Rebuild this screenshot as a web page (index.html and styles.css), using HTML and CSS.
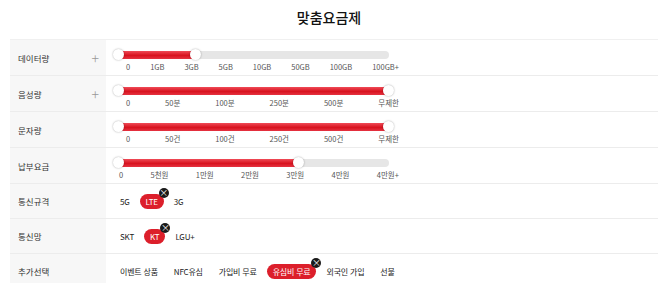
FILE: index.html
```html
<!DOCTYPE html>
<html lang="ko">
<head>
    <meta charset="UTF-8">
    <title>맞춤요금제</title>
    <link rel="stylesheet" href="styles.css">
</head>
<body>
    <h1 class="title">맞춤요금제</h1>
    <div class="filter">
        <div class="row">
            <div class="label">데이터량 <span class="plus">+</span></div>
            <div class="cell">
                <div class="slider">
                    <div class="track"><div class="fill" style="width: 28.7%"></div></div>
                    <span class="knob" style="left: 0%"></span>
                    <span class="knob" style="left: 28.7%"></span>
                </div>
                <div class="ticks">
                    <span>0</span><span>1GB</span><span>3GB</span><span>5GB</span><span>10GB</span><span>50GB</span><span>100GB</span><span>100GB+</span>
                </div>
            </div>
        </div>
        <div class="row">
            <div class="label">음성량 <span class="plus">+</span></div>
            <div class="cell">
                <div class="slider">
                    <div class="track"><div class="fill" style="width: 100%"></div></div>
                    <span class="knob" style="left: 0%"></span>
                    <span class="knob" style="left: 100%"></span>
                </div>
                <div class="ticks">
                    <span>0</span><span>50분</span><span>100분</span><span>250분</span><span>500분</span><span>무제한</span>
                </div>
            </div>
        </div>
        <div class="row">
            <div class="label">문자량</div>
            <div class="cell">
                <div class="slider">
                    <div class="track"><div class="fill" style="width: 100%"></div></div>
                    <span class="knob" style="left: 0%"></span>
                    <span class="knob" style="left: 100%"></span>
                </div>
                <div class="ticks">
                    <span>0</span><span>50건</span><span>100건</span><span>250건</span><span>500건</span><span>무제한</span>
                </div>
            </div>
        </div>
        <div class="row">
            <div class="label">납부요금</div>
            <div class="cell">
                <div class="slider">
                    <div class="track"><div class="fill" style="width: 66.5%"></div></div>
                    <span class="knob" style="left: 0%"></span>
                    <span class="knob" style="left: 66.5%"></span>
                </div>
                <div class="ticks ticks-wide">
                    <span>0</span><span>5천원</span><span>1만원</span><span>2만원</span><span>3만원</span><span>4만원</span><span>4만원+</span>
                </div>
            </div>
        </div>
        <div class="row row-short">
            <div class="label">통신규격</div>
            <div class="cell chips">
                <span class="chip">5G</span>
                <span class="chip active">LTE<i class="close">×</i></span>
                <span class="chip">3G</span>
            </div>
        </div>
        <div class="row row-short">
            <div class="label">통신망</div>
            <div class="cell chips">
                <span class="chip">SKT</span>
                <span class="chip active">KT<i class="close">×</i></span>
                <span class="chip">LGU+</span>
            </div>
        </div>
        <div class="row row-short">
            <div class="label">추가선택</div>
            <div class="cell chips">
                <span class="chip">이벤트 상품</span>
                <span class="chip">NFC유심</span>
                <span class="chip">가입비 무료</span>
                <span class="chip active">유심비 무료<i class="close">×</i></span>
                <span class="chip">외국인 가입</span>
                <span class="chip">선불</span>
            </div>
        </div>
    </div>
</body>
</html>
```

FILE: styles.css
```css
body {
    margin: 0;
    font-family: "Noto Sans CJK KR", "Noto Sans", sans-serif;
    background-color: #fff;
    color: #222;
    overflow: hidden;
}

.title {
    margin: 0;
    height: 39px;
    line-height: 34px;
    text-align: center;
    font-size: 14px;
    font-weight: 500;
    color: #111;
}

.filter {
    margin-left: 10px;
    border-top: 1px solid #f0f0f0;
}

.row {
    display: flex;
    height: 35px;
    border-bottom: 1px solid #ececec;
}

.row-short {
    height: 34px;
}

.label {
    display: flex;
    align-items: center;
    justify-content: space-between;
    width: 81px;
    padding: 0 7px 0 8px;
    background-color: #f7f7f7;
    font-size: 8.5px;
    color: #333;
}

.plus {
    font-size: 14px;
    font-weight: 300;
    color: #999;
}

.cell {
    flex: 1;
    padding-left: 13px;
}

.slider {
    position: relative;
    width: 270px;
    height: 8px;
    margin-top: 11px;
}

.track {
    height: 8px;
    border-radius: 4px;
    background-color: #e6e6e6;
    overflow: hidden;
}

.fill {
    height: 100%;
    border-radius: 4px;
    background: linear-gradient(to bottom, #f04b57 0%, #d8131f 55%, #e53341 100%);
}

.knob {
    position: absolute;
    top: -2px;
    width: 11px;
    height: 11px;
    margin-left: -6px;
    border-radius: 50%;
    background-color: #fff;
    box-shadow: 0 0 2px rgba(0, 0, 0, 0.35);
}

.ticks {
    display: flex;
    justify-content: space-between;
    width: 273px;
    margin-top: 2px;
    padding-left: 7px;
    font-size: 7.5px;
    line-height: 12px;
    color: #555;
}

.ticks-wide {
    width: 280px;
    padding-left: 0;
}

.chips {
    display: flex;
    align-items: center;
    gap: 16px;
    padding-left: 14px;
}

.chip {
    position: relative;
    font-size: 8px;
    letter-spacing: -0.2px;
    color: #222;
}

.chip.active {
    margin: 0 -6px;
    padding: 0 6px;
    height: 15px;
    line-height: 15px;
    border-radius: 8px;
    background-color: #dc1f2b;
    color: #fff;
}

.close {
    position: absolute;
    top: -6px;
    right: -5px;
    width: 10px;
    height: 10px;
    border-radius: 50%;
    background-color: #1a1a1a;
    color: #fff;
    font-style: normal;
    font-size: 9px;
    line-height: 9px;
    text-align: center;
    letter-spacing: 0;
}
```
